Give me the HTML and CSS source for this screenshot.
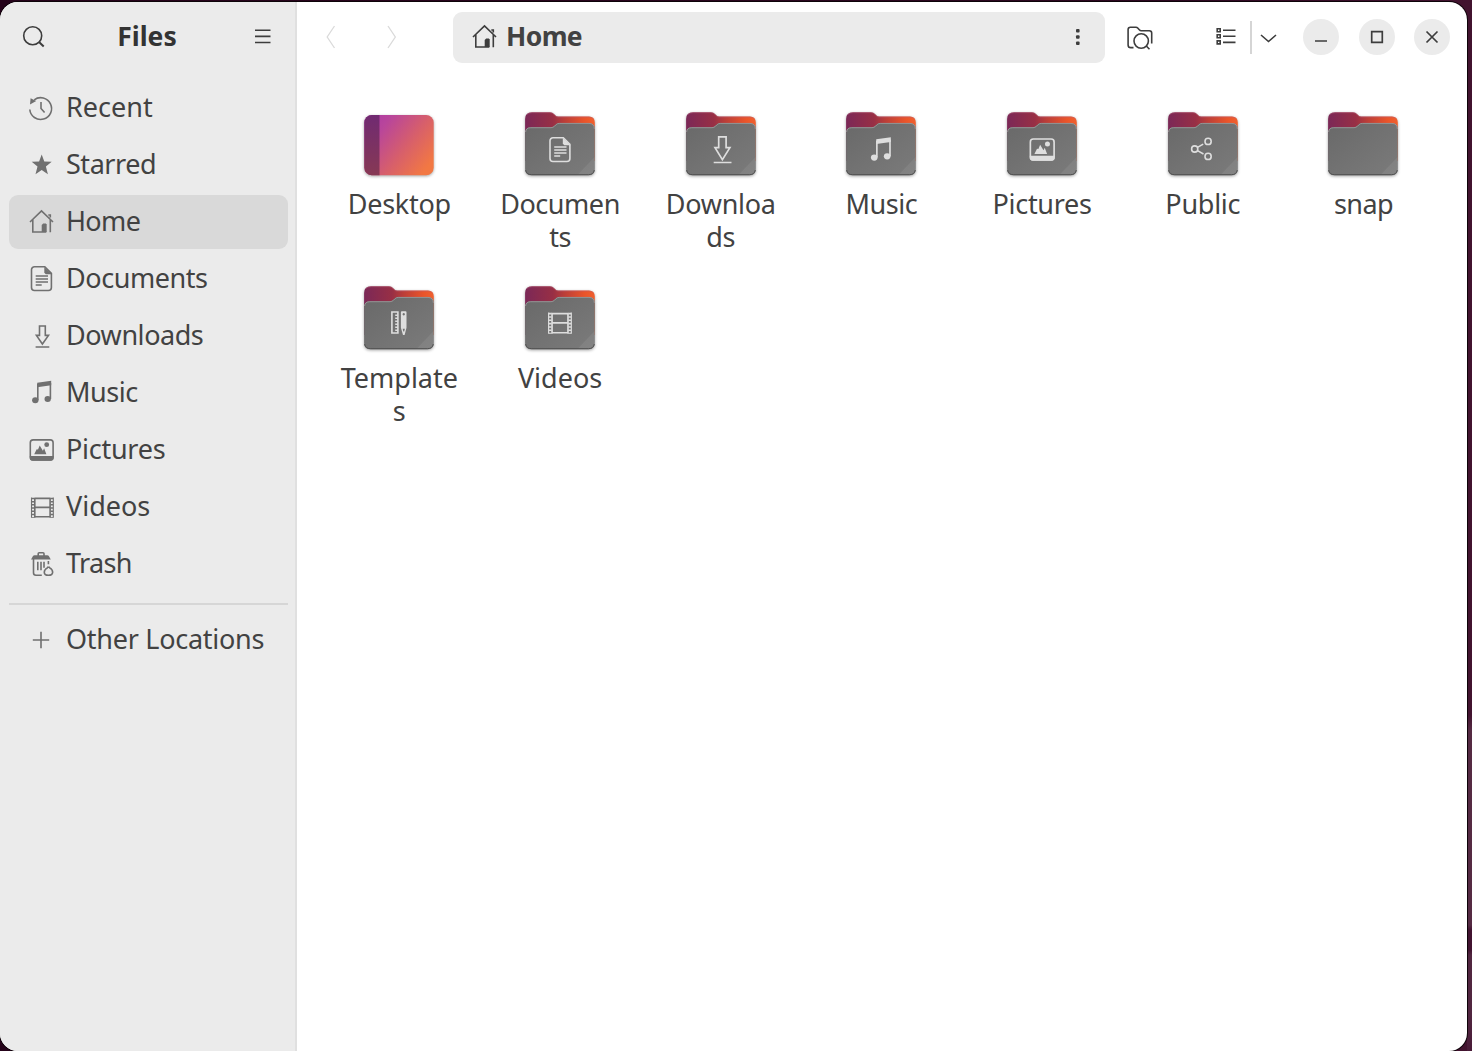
FILE: index.html
```html
<!DOCTYPE html>
<html lang="en">
<head>
<meta charset="utf-8">
<title>Home</title>
<link rel="stylesheet" href="styles.css">
</head>
<body>
<svg class="defs" width="0" height="0" aria-hidden="true">
  <defs>
    <linearGradient id="back" x1="0" y1="0" x2="1" y2="0"><stop offset="0" stop-color="#7b2857"/><stop offset=".4" stop-color="#982f45"/><stop offset=".55" stop-color="#b93d39"/><stop offset=".85" stop-color="#e9542a"/><stop offset="1" stop-color="#f0602e"/></linearGradient>
    <linearGradient id="front" x1="0" y1="0" x2="1" y2="1"><stop offset="0" stop-color="#696969"/><stop offset="1" stop-color="#7b7b7b"/></linearGradient>
    <linearGradient id="desk" x1=".1" y1=".1" x2="1" y2=".7"><stop offset="0" stop-color="#b03ca4"/><stop offset=".2" stop-color="#b9469a"/><stop offset=".6" stop-color="#d75f6b"/><stop offset="1" stop-color="#f27843"/></linearGradient>
    <linearGradient id="strip" x1="0" y1="0" x2="0" y2="1"><stop offset="0" stop-color="#702a72"/><stop offset="1" stop-color="#873954"/></linearGradient>
    <clipPath id="deskclip"><rect x="1.3" y="4" width="69.4" height="60.3" rx="7.500"/></clipPath>
  </defs>
  <symbol id="recent" viewBox="0 0 24 24"><path class="line" d="M.8 13.5A10.9 10.9 0 1 0 5.2 3.8M12 6v6.4l3.6 4.2"/><path class="fill" d="M1.6 2.2 7.2 5 1 8.4z"/></symbol>
  <symbol id="star" viewBox="0 0 24 24"><path class="fill" d="m12.7 1.5 2.6 7 7.4.3-5.8 4.6 2 7.9-6.2-4.3-6.2 4.3 2-7.9-5.8-4.6 7.4-.3z"/></symbol>
  <symbol id="home" viewBox="0 0 24 24"><path class="line" d="M1 12 12.5.9 24 12M3.8 9.5V22h13.5M21.3 9.5v12.8M19.3 5h2v2.5"/><path class="fill" d="M12.7 22v-7l1.5-1.5h2.6l.9.9V22z"/></symbol>
  <symbol id="doc" viewBox="0 0 24 24"><path class="line" d="M5.5-.3h10.3l6.6 6.6v14.2a3 3 0 0 1-3 3H5.5a3 3 0 0 1-3-3V2.7a3 3 0 0 1 3-3zM6.7 9H19M6.7 12H19M6.7 15H19M6.7 18h6"/><path class="fill" d="M15.3 0 23 7.2h-6.2l-1.5-1.5z"/></symbol>
  <symbol id="down" viewBox="0 0 24 24"><path class="line" d="M10.5 2h5.8v9.4h3.2L13.4 20l-6-8.6h3.1zM6.6 23h13.7"/></symbol>
  <symbol id="music" viewBox="0 0 24 24"><path class="fill" d="M8.2 1.7 22.2-.3v4.6l-14 2z"/><path class="line" d="M8.8 3v16M21.4 2v16"/><ellipse class="fill" cx="6.3" cy="19.3" rx="3.2" ry="3"/><ellipse class="fill" cx="18.7" cy="18" rx="3.2" ry="3"/></symbol>
  <symbol id="pic" viewBox="0 0 24 24"><rect class="line" x="1.3" y="1.9" width="22.8" height="20" rx="2.8"/><path class="fill" d="M.8 18h23.8v2a2.7 2.7 0 0 1-2.7 2.7H3.5A2.7 2.7 0 0 1 .8 20zM5.2 16.3l2.5-5 1.3.2 1.7-4 3.2 5.2 1.2-2.4 2.3 6z"/><circle class="fill" cx="17.7" cy="6.7" r="2.4"/></symbol>
  <symbol id="video" viewBox="0 0 24 24"><path class="line" d="M5.8 3.4h15.3M5.8 12.4h15.3M5.8 21.8h15.3M5.8 2.7v20M21.1 2.7v20"/><path class="thin" d="M2.5 2.5v20.2M24.3 2.5v20.2"/><path class="film" d="M4.1 2.7v20M22.8 2.7v20"/></symbol>
  <symbol id="trash" viewBox="0 0 24 24"><path class="line" d="M9.2 4V1.8q0-1 1-1h3.8q1 0 1 1V4M4.5 7v13.8q0 2.5 2.5 2.5h5.8M8.8 9.7v8.6M12 9.7v8.6M15 9.7v6M19.4 9v3.2"/><path class="fill" d="M2 7.4 4 4q.5-.8 1.5-.8h12.8q1 0 1.5.8l2 3.4z"/><path class="line" d="M18 15.2h3M18.8 15.6C14 18 14 23.3 19.4 23.3s5.6-5.3.9-7.7"/></symbol>
  <symbol id="plus" viewBox="0 0 24 24"><path class="line" d="M3.8 12h16.4M12 3.8v16.4"/></symbol>
  <symbol id="share" viewBox="0 0 24 24"><g class="line"><circle cx="5" cy="12" r="3.1"/><circle cx="18.4" cy="4.4" r="3.1"/><circle cx="18.4" cy="19.4" r="3.1"/><path d="m7.8 10.4 5.7-3.3M7.8 13.6l6 3.4"/></g></symbol>
  <symbol id="template" viewBox="0 0 24 24"><path class="line" d="M4.2 1h6v21h-6zM10 4.2H7.5M10 7.2H7.5M10 10.2H7.5M10 13.2H7.5M10 16.2H7.5M10 19.2H7.5"/><path class="fill" fill-rule="evenodd" d="M14.2.2h3.6q1 0 1 1v15.6L16.9 24h-1.6l-2.1-7.2V1.2q0-1 1-1zM16 2a1.2 1.2 0 1 0 .1 0zM15 17.8l.6 2.6h.9l.7-2.6z"/></symbol>
  <symbol id="folder" viewBox="0 0 72 72"><path fill="url(#back)" d="M8 1.2h18q2.5 0 4 1.8l1.5 1.5q1 1 2.7 1H65q5.8 0 5.8 6V50H1.1V8q0-6.8 6.9-6.8z"/><path fill="none" stroke="#b86078" stroke-opacity=".5" stroke-width=".9" d="M3 3.5Q5 1.7 8 1.7h18q2.3 0 3.7 1.5l1.5 1.5q1.3 1.3 3 1.3H65q3 0 4.5 2"/><path fill="url(#front)" d="M1.100 22q0-5.8 5.7-5.8H27q2 0 3.3-1.4l1.5-1.6q1.4-1.3 3.4-1.3H65q5.8 0 5.8 6v40q0 6.4-6.4 6.4H7.5q-6.4 0-6.4-6.4z"/><path fill="none" stroke="#989898" stroke-width=".9" d="M1.6 21q.3-4.3 5.2-4.3H27q2 0 3.600-1.5l1.5-1.5q1.4-1.300 3.100-1.300H65q5.300 0 5.300 5.500"/><path fill="#fff" fill-opacity=".07" d="M70.700 46v12q0 6.200-6.200 6.200H53z"/><path fill="none" stroke="#515151" stroke-width="1" d="M1.600 59q.8 4.700 6 4.700h56.800q5.200 0 5.900-4.700"/></symbol>
</svg>
<div class="window">
  <aside class="sidebar">
    <header class="side-head">
      <svg class="i-search" width="24" height="24"><circle cx="10.7" cy="10.700" r="9"/><path d="m17 17 4.700 4.500" stroke-width="2"/></svg>
      <h1>Files</h1>
      <svg class="i-menu" width="16" height="16"><path d="M0 1.300h15.500M0 7.400h15.500M0 13.500h15.500"/></svg>
    </header>
    <nav class="places">
      <a class="place"><svg class="ico"><use href="#recent"/></svg><span>Recent</span></a>
      <a class="place"><svg class="ico"><use href="#star"/></svg><span class="snug">Starred</span></a>
      <a class="place active"><svg class="ico"><use href="#home"/></svg><span class="tight">Home</span></a>
      <a class="place"><svg class="ico"><use href="#doc"/></svg><span class="snug">Documents</span></a>
      <a class="place"><svg class="ico"><use href="#down"/></svg><span class="snug">Downloads</span></a>
      <a class="place"><svg class="ico"><use href="#music"/></svg><span class="snug">Music</span></a>
      <a class="place"><svg class="ico"><use href="#pic"/></svg><span class="close">Pictures</span></a>
      <a class="place"><svg class="ico"><use href="#video"/></svg><span>Videos</span></a>
      <a class="place"><svg class="ico"><use href="#trash"/></svg><span class="tight">Trash</span></a>
    </nav>
    <hr>
    <a class="place"><svg class="ico"><use href="#plus"/></svg><span class="close">Other Locations</span></a>
  </aside>
  <main>
    <header class="toolbar">
      <div class="history">
        <svg width="10" height="24"><path d="M8.500 1 1.200 12l7.300 11"/></svg>
        <svg width="10" height="24"><path d="m1 1 7.300 11L1 23"/></svg>
      </div>
      <div class="pathbar">
        <svg class="ico"><use href="#home"/></svg>
        <span>Home</span>
        <svg class="dots" width="4" height="18"><rect y="1" width="3.600" height="3.600" rx="1"/><rect y="7.200" width="3.600" height="3.600" rx="1"/><rect y="13.400" width="3.600" height="3.600" rx="1"/></svg>
      </div>
      <svg class="i-find" width="26" height="24"><path d="M6.500 21.600H3.800q-2.700 0-2.700-2.700V3.500Q1.100 1.200 3.400 1.200H9q1 0 1.700.8l1.600 1.800q.8.900 2 .9h8q2.400 0 2.400 2.400v10.500"/><circle cx="14.200" cy="15" r="7.200"/><path d="m19.300 20 3.200 3.200"/></svg>
      <svg class="i-list" width="20" height="20"><path d="M1.200 1.700h3v3h-3zM1.200 7.800h3v3h-3zM1.200 13.900h3v3h-3zM7 3.200h12.500M7 9.300h12.500M7 15.400h12.500"/></svg>
      <div class="divider"></div>
      <svg class="i-chev" width="17" height="8"><path d="m1 1 7.500 6.500L16 1"/></svg>
      <div class="controls">
        <button aria-label="Minimize"><svg width="14" height="14"><path d="M1 11h12"/></svg></button>
        <button aria-label="Maximize"><svg width="14" height="14"><path d="M1.700 1.700h10.600v10.600H1.700z"/></svg></button>
        <button aria-label="Close"><svg width="14" height="14"><path d="m1.500 1.500 11 11m0-11-11 11"/></svg></button>
      </div>
    </header>
    <section class="grid">
      <div class="item"><svg class="pict" viewBox="0 0 72 72"><g clip-path="url(#deskclip)"><path fill="url(#desk)" d="M0 3h72v62H0z"/><path fill="url(#strip)" d="M0 3h16.500v62H0z"/></g></svg><span class="close">Desktop</span></div>
      <div class="item"><svg class="pict" viewBox="0 0 72 72"><use href="#folder"/><use class="glyph" href="#doc" x="23.500" y="27" width="24" height="24"/></svg><span class="snug">Documen<br>ts</span></div>
      <div class="item"><svg class="pict" viewBox="0 0 72 72"><use href="#folder"/><path class="arrow" d="M33.700 25.800h7.400v10.800h3.800l-7.500 12-7.400-12h3.700zM28.700 51.500h17.800"/></svg><span class="close">Downloa<br>ds</span></div>
      <div class="item"><svg class="pict" viewBox="0 0 72 72"><use href="#folder"/><use class="glyph" href="#music" x="22.700" y="26.500" width="25" height="25"/></svg><span class="snug">Music</span></div>
      <div class="item"><svg class="pict" viewBox="0 0 72 72"><use href="#folder"/><use class="glyph" href="#pic" x="23" y="26" width="25" height="25"/></svg><span class="close">Pictures</span></div>
      <div class="item"><svg class="pict" viewBox="0 0 72 72"><use href="#folder"/><use class="glyph" href="#share" x="22.700" y="26" width="24" height="24"/></svg><span class="close">Public</span></div>
      <div class="item"><svg class="pict" viewBox="0 0 72 72"><use href="#folder"/></svg><span class="tight">snap</span></div>
      <div class="item"><svg class="pict" viewBox="0 0 72 72"><use href="#folder"/><use class="glyph" href="#template" x="24.700" y="26" width="24" height="24"/></svg><span>Template<br>s</span></div>
      <div class="item"><svg class="pict" viewBox="0 0 72 72"><use href="#folder"/><use class="glyph" href="#video" x="22" y="25" width="25" height="25"/></svg><span>Videos</span></div>
    </section>
  </main>
</div>
</body>
</html>
```
FILE: styles.css
```css
* { box-sizing: border-box; }
body {
  margin: 0;
  width: 1472px;
  height: 1051px;
  padding: 2px 5px 0 0;
  overflow: hidden;
  font-family: "Noto Sans", "Open Sans", sans-serif;
  font-size: 27px;
  color: #424242;
  background:
    linear-gradient(90deg, #25031a, #2d0820 80%, #42132f) 0 0 / 1467px 100% no-repeat,
    linear-gradient(#42132f 0, #42132f 715px, #552a43 730px, #552a43 925px, #421330 930px, #421330 950px, #512640 955px, #512640 1015px, #491b38 1051px);
}
.defs { position: absolute; }
svg { display: block; flex: none; overflow: visible; fill: none; stroke: #3d3d3d; stroke-width: 1.6; }
symbol { overflow: visible; }
.line { fill: none; stroke: currentColor; stroke-width: 1.6; }
.thin { fill: none; stroke: currentColor; stroke-width: 1.1; }
.film { fill: none; stroke: currentColor; stroke-width: 2.6; stroke-dasharray: 1.5 1.7; }
.fill { fill: currentColor; stroke: none; }
.ico { width: 24px; height: 24px; stroke: none; }
.close { letter-spacing: -.27px; }
.snug { letter-spacing: -.45px; }
.tight { letter-spacing: -.65px; }

.window {
  display: flex;
  height: 1049px;
  border-radius: 18px;
  overflow: hidden;
  background: #fff;
  box-shadow: 0 0 0 1px #0d0309;
}
.sidebar { width: 297px; padding: 0 7px 0 9px; background: #ebebeb; border-right: 2px solid #e0e0e0; }
.side-head { display: flex; align-items: center; justify-content: space-between; height: 70px; padding: 0 17px 0 13px; }
h1 { margin: 0 7px 2px 0; font-size: 26.5px; line-height: 36px; font-weight: 700; color: #333; }
.i-menu { stroke-width: 1.6; }
.places { display: flex; flex-direction: column; gap: 3px; padding-top: 9px; }
.place { display: flex; align-items: center; gap: 13px; width: 279px; height: 54px; padding-left: 20px; border-radius: 9px; white-space: nowrap; line-height: 36px; }
.place span { padding-bottom: 2px; }
.place .ico { color: #707070; }
.active { background: #d9d9d9; }
hr { margin: 12px 0 8px; border: 0; height: 2px; width: 279px; background: #d6d6d6; }

main { flex: 1; }
.toolbar { display: flex; align-items: center; height: 70px; padding-left: 29px; }
.history { display: flex; gap: 51px; width: 127px; }
.history svg { stroke: #dadada; stroke-width: 1.3; }
.pathbar { display: flex; align-items: center; width: 652px; height: 51px; padding: 0 25px 0 19px; border-radius: 9px; background: #ebebeb; font-weight: 700; line-height: 36px; }
.pathbar .ico { color: #3d3d3d; }
.pathbar span { margin-left: 10px; padding-bottom: 2px; font-size: 26.5px; letter-spacing: -.6px; }
.dots { margin-left: auto; fill: #3d3d3d; stroke: none; }
.i-find { margin: 1px 0 0 22px; }
.i-list { margin-left: 63px; }
.divider { margin-left: 14px; width: 2px; height: 33px; background: #d5d5d5; }
.i-chev { margin: 1px 0 0 8px; }
.controls { display: flex; gap: 19.5px; margin-left: 26px; }
button { display: grid; place-items: center; width: 36px; height: 36px; padding: 0; border: 0; border-radius: 50%; background: #ebebeb; }
button svg { stroke-width: 1.7; }

.grid { display: grid; grid-template-columns: repeat(7, 160.7px); grid-auto-rows: 174px; padding: 39px 0 0 22px; }
.item { display: flex; flex-direction: column; align-items: center; text-align: center; line-height: 33px; white-space: nowrap; }
.pict { width: 72px; height: 72px; margin-bottom: 4px; stroke: none; filter: drop-shadow(0 1.5px 1.5px rgba(0, 0, 0, .35)); }
.glyph { color: #dedede; }
.arrow { stroke: #dedede; stroke-width: 1.7; }
```
